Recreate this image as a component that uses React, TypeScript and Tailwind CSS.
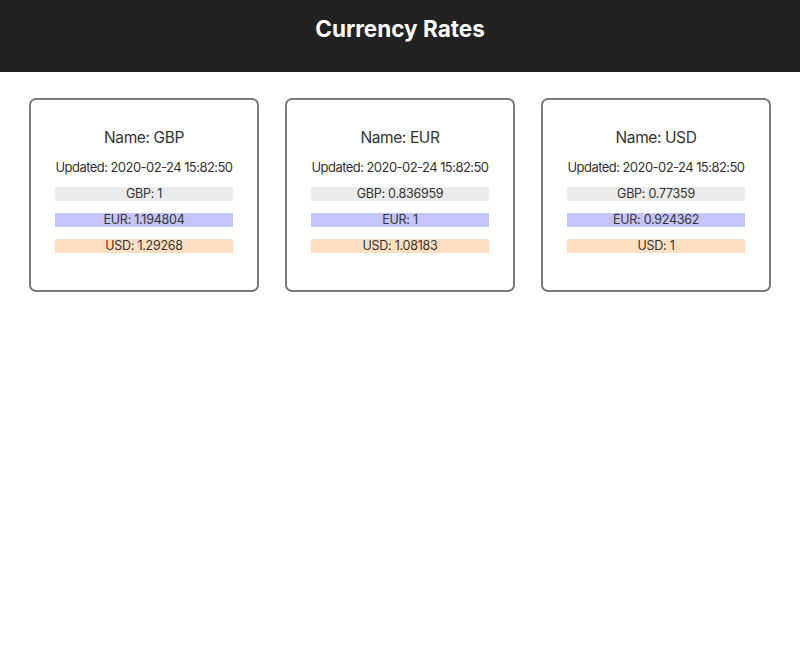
import React from "react";

const cards = [
  { name: "GBP", rates: ["GBP: 1", "EUR: 1.194804", "USD: 1.29268"] },
  { name: "EUR", rates: ["GBP: 0.836959", "EUR: 1", "USD: 1.08183"] },
  { name: "USD", rates: ["GBP: 0.77359", "EUR: 0.924362", "USD: 1"] },
];

const barColors = ["bg-[#ebebeb]", "bg-[#c5c5fb]", "bg-[#ffe1c2]"];

export default function App() {
  return (
    <div className="min-h-screen bg-white font-['Inter',sans-serif] text-[#333]">
      <header className="h-[72px] bg-[#222222] pt-[15px]">
        <h1 className="text-center text-[22.5px] font-bold leading-[28px] text-white">Currency Rates</h1>
      </header>
      <main className="grid grid-cols-3 gap-[26px] px-[29px] pt-[26px]">
        {cards.map((c) => (
          <div key={c.name} className="rounded-[7px] border-2 border-[#7a7a7a] px-[24px] pt-[28px] pb-[37px] text-center">
            <div className="text-[15.5px] leading-[20px] tracking-[-0.4px]">Name: {c.name}</div>
            <div className="mt-[10px] -mx-[10px] whitespace-nowrap text-[13px] leading-[18px] tracking-[-0.55px]">Updated: 2020-02-24 15:82:50</div>
            <div className="mt-[11px] flex flex-col gap-[12px]">
              {c.rates.map((r, i) => (
                <div key={r} className={`${barColors[i]} h-[14px] text-[12.5px] leading-[14px] tracking-[-0.25px]`}>
                  {r}
                </div>
              ))}
            </div>
          </div>
        ))}
      </main>
    </div>
  );
}
